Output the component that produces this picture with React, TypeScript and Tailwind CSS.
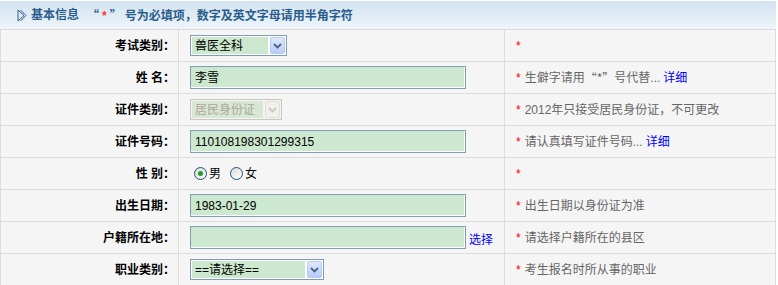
import React from 'react';

const cn = '"Liberation Sans", "Noto Sans CJK SC", Arial, sans-serif';

function Chevron({ disabled }: { disabled?: boolean }) {
  return (
    <svg width="9" height="6" viewBox="0 0 9 6">
      <path d="M1 1 L4.5 4.5 L8 1" fill="none" stroke={disabled ? '#c9c7ba' : '#4d6185'} strokeWidth="1.8" />
    </svg>
  );
}

function FakeSelect({ value, width, disabled }: { value: string; width: string; disabled?: boolean }) {
  return (
    <div
      className={`flex h-[21px] items-stretch border p-px ${width} ${
        disabled ? 'border-[#c9c7ba] bg-[#f5f5f5]' : 'border-[#7f9db9] bg-white'
      }`}
    >
      <span
        className={`flex flex-1 items-center pl-[3px] text-[12px] ${
          disabled ? 'bg-[#d8e6d4] text-[#aca899]' : 'bg-[#cce8cf] text-black'
        }`}
      >
        {value}
      </span>
      <span
        className={`ml-[2px] flex w-[15px] items-center justify-center rounded-[2px] border ${
          disabled
            ? 'border-[#e0dfd8] bg-[#f1f0ea]'
            : 'border-[#b8c9f2] bg-gradient-to-b from-[#e0e8fd] to-[#b9cbf6]'
        }`}
      >
        <Chevron disabled={disabled} />
      </span>
    </div>
  );
}

function TextBox({ value }: { value?: string }) {
  return (
    <div className="flex h-[23px] w-[276px] items-center border border-[#7f9db9] bg-[#cce8cf] pl-[4px] text-[12px] text-black shadow-[inset_-1px_-1px_0_#ffffff]">
      {value}
    </div>
  );
}

function Radio({ checked }: { checked?: boolean }) {
  return (
    <span className="flex h-[13px] w-[13px] items-center justify-center rounded-full border border-[#1c5180] bg-gradient-to-br from-[#dcdcd7] to-white">
      {checked && <span className="h-[5px] w-[5px] rounded-full bg-[#21a121]" />}
    </span>
  );
}

// CJK quotes are full width in the original
const Q = ({ children }: { children: React.ReactNode }) => (
  <span className="font-['Noto_Sans_CJK_SC']">{children}</span>
);

type Row = { label: string; field: React.ReactNode; hint: React.ReactNode };

const Detail = () => <a className="ml-[3px] text-[#0000ff]">详细</a>;

const rows: Row[] = [
  { label: '考试类别：', field: <FakeSelect value="兽医全科" width="w-[97px]" />, hint: null },
  {
    label: '姓 名：',
    field: <TextBox value="李雪" />,
    hint: (
      <>
        生僻字请用<Q>“*”</Q>号代替...<Detail />
      </>
    ),
  },
  {
    label: '证件类别：',
    field: <FakeSelect value="居民身份证" width="w-[92px]" disabled />,
    hint: '2012年只接受居民身份证，不可更改',
  },
  { label: '证件号码：', field: <TextBox value="110108198301299315" />, hint: <>请认真填写证件号码...<Detail /></> },
  {
    label: '性 别：',
    field: (
      <div className="ml-[4px] flex items-center text-[12px]">
        <Radio checked />
        <span className="ml-[2px]">男</span>
        <span className="ml-[9px]"><Radio /></span>
        <span className="ml-[2px]">女</span>
      </div>
    ),
    hint: null,
  },
  { label: '出生日期：', field: <TextBox value="1983-01-29" />, hint: '出生日期以身份证为准' },
  {
    label: '户籍所在地：',
    field: (
      <div className="flex items-center">
        <TextBox />
        <a className="ml-[3px] mt-[5px] text-[12px] text-[#0000ff]">选择</a>
      </div>
    ),
    hint: '请选择户籍所在的县区',
  },
  { label: '职业类别：', field: <FakeSelect value="==请选择==" width="w-[134px]" />, hint: '考生报名时所从事的职业' },
];

export default function App() {
  return (
    <div className="w-[778px] bg-white pt-px" style={{ fontFamily: cn }}>
      <div className="w-[776px]">
        <div className="flex h-[28px] items-center bg-gradient-to-b from-[#d2e3f0] to-[#eef5fa] pl-[17px] text-[12px] font-bold text-[#2a5d8c]">
          <svg width="10" height="13" viewBox="0 0 10 13" className="mr-[4px]">
            <path d="M1 1 V12 L7 6.5 Z" fill="none" stroke="#2a5d8c" strokeWidth="1" />
            <path d="M3.5 1 L9 6.5 L3.5 12" fill="none" stroke="#2a5d8c" strokeWidth="1" />
          </svg>
          <span>基本信息</span>
          <span className="ml-[8px]">
            <Q>“</Q>
            <span className="mx-[3px] text-[#ff3333]">*</span>
            <Q>”</Q>
            <span className="ml-[3px]">号为必填项，数字及英文字母请用半角字符</span>
          </span>
        </div>
        <div className="grid auto-rows-[31px] grid-cols-[177px_325px_270px] gap-px bg-[#dcdcdc] p-px pb-0">
          {rows.map((r) => (
            <React.Fragment key={r.label}>
              <div className="flex items-center justify-end bg-[#f5f5f5] pr-[3px] text-[12px] font-bold text-black">
                {r.label}
              </div>
              <div className="flex items-center bg-[#f5f5f5] pl-[11px]">{r.field}</div>
              <div className="flex items-center bg-[#f5f5f5] pl-[11px] text-[12px] text-[#666666]">
                <span className="mr-[4px] text-[#ff0000]">*</span>
                {r.hint}
              </div>
            </React.Fragment>
          ))}
        </div>
      </div>
    </div>
  );
}
